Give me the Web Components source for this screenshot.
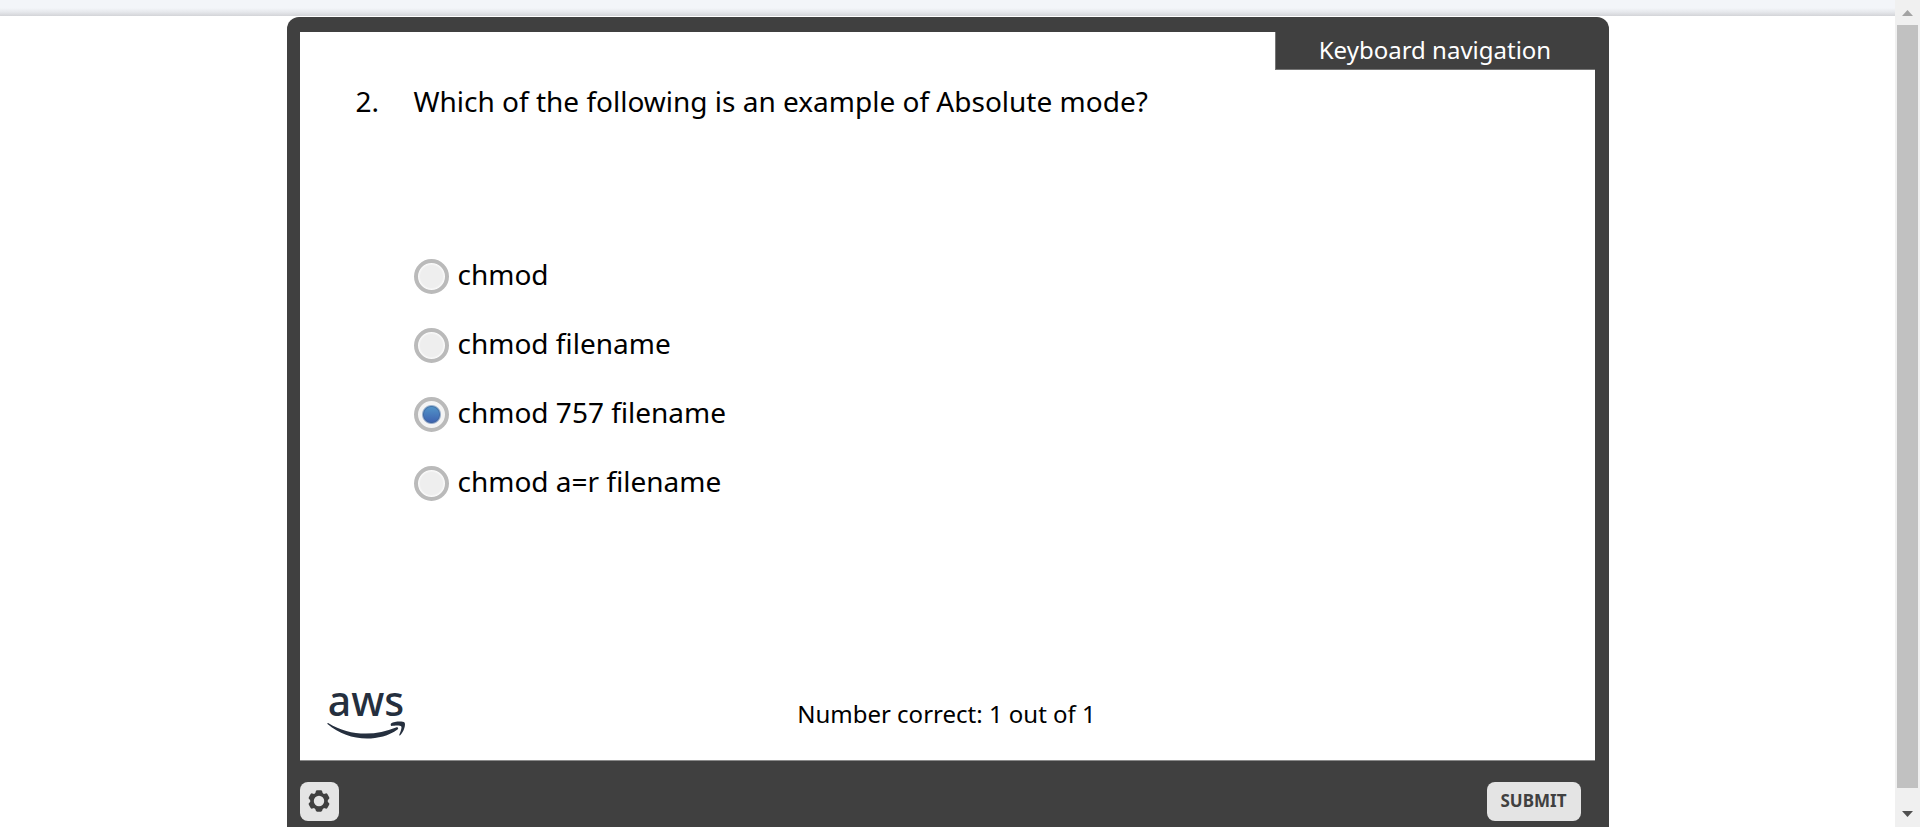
<!DOCTYPE html>
<html lang="en">
<head>
<meta charset="utf-8">
<title>Knowledge check</title>
<style>
  html, body { margin: 0; height: 100%; overflow: hidden; background: #fff; }
  body { font-family: "Noto Sans", "Open Sans", sans-serif; color: #000; }
</style>
</head>
<body>
<quiz-page>
  <quiz-player>
    <a slot="tab" href="#keys">Keyboard navigation</a>
    <quiz-question number="2." text="Which of the following is an example of Absolute mode?">
      <quiz-option value="a">chmod</quiz-option>
      <quiz-option value="b">chmod filename</quiz-option>
      <quiz-option value="c" checked>chmod 757 filename</quiz-option>
      <quiz-option value="d">chmod a=r filename</quiz-option>
    </quiz-question>
    <aws-logo slot="brand"></aws-logo>
    <span slot="score">Number correct: 1 out of 1</span>
    <settings-button slot="controls"></settings-button>
    <submit-button slot="controls">SUBMIT</submit-button>
  </quiz-player>
</quiz-page>

<script>
const define = (name, html, setup) => customElements.define(name, class extends HTMLElement {
  constructor() {
    super();
    this.attachShadow({ mode: 'open' }).innerHTML = html;
  }
  connectedCallback() { if (setup) setup(this, this.shadowRoot); }
});

define('scroll-rail', `
  <style>
    :host { display: flex; flex-direction: column; align-items: center; background: #f0f0f0; }
    svg { display: block; width: 25px; height: 25px; flex: none; }
    .thumb { width: 21px; flex: 1; background: #c1c1c1; }
    .rest { height: 14px; }
  </style>
  <svg viewBox="0 0 25 25" aria-hidden="true"><path d="M7 16h11l-5.500-6z" fill="#a3a3a3"/></svg>
  <div class="thumb"></div><div class="rest"></div>
  <svg viewBox="0 0 25 25" aria-hidden="true"><path d="M7 9h11l-5.500 6z" fill="#505050"/></svg>
`);

define('quiz-page', `
  <style>
    :host { display: grid; grid-template-columns: 1fr 25px; height: 100vh; }
    main { overflow: hidden; }
    .header { height: 16px; background: linear-gradient(#f3f5f9 0 50%, #e6e8ec 75%, #d3d4d8); }
    .stage { padding-top: 1px; }
  </style>
  <main><div class="header"></div><div class="stage"><slot></slot></div></main>
  <scroll-rail></scroll-rail>
`);

define('quiz-player', `
  <style>
    :host { display: block; box-sizing: border-box; width: 70%; min-width: 720px; max-width: 1322px; margin: 0 auto;
      padding: 15px 14px 0 13px; border-radius: 12px 12px 0 0; background: #404040; }
    .slide { display: flex; flex-direction: column; background: #fff; min-height: 728px; border-bottom: 1px solid #8a8a8a; }
    .tab { align-self: flex-end; box-sizing: border-box; width: 320px; height: 38px; background: #404040;
      border: solid #757575; border-width: 0 0 1px 1px; text-align: center; }
    ::slotted(a) { color: #fff; text-decoration: none; font-size: 24px; line-height: 36px; }
    .body { flex: 1; }
    .foot { display: grid; grid-template-columns: 1fr auto 1fr; align-items: end; padding: 0 28px 21px 27px; }
    .score { padding-bottom: 9px; font-size: 24px; line-height: 32px; }
    .bar { display: flex; justify-content: space-between; padding: 21px 14px 20px 0; }
  </style>
  <section class="slide">
    <div class="tab"><slot name="tab"></slot></div>
    <div class="body"><slot></slot></div>
    <div class="foot"><slot name="brand"></slot><div class="score"><slot name="score"></slot></div></div>
  </section>
  <div class="bar"><slot name="controls"></slot></div>
`);

define('quiz-question', `
  <style>
    :host { display: block; padding: 11px 28px 0 56px; font-size: 28px; line-height: 40px; }
    .row { display: grid; grid-template-columns: 58px 1fr; }
    h1, p { margin: 0; font: inherit; }
    .options { grid-column: 2; display: grid; gap: 29px; margin-top: 134px; }
  </style>
  <div class="row">
    <p class="num"></p><h1 id="q"></h1>
    <div class="options" role="radiogroup" aria-labelledby="q"><slot></slot></div>
  </div>
`, (el, root) => {
  root.querySelector('.num').textContent = el.getAttribute('number');
  root.querySelector('h1').textContent = el.getAttribute('text');
});

define('quiz-option', `
  <style>
    :host { display: block; }
    label { display: flex; align-items: start; gap: 9px; height: 40px; line-height: 38px; width: fit-content; cursor: pointer; }
    input { appearance: none; box-sizing: border-box; width: 35px; height: 35px; margin: 4px 0 0; border-radius: 50%;
      border: 4px solid #bababa; background: radial-gradient(circle, #eee 0 11px, #fafafa 13px); }
    input:checked { background:
      radial-gradient(circle, transparent 0 7px, #3c629799 8px, #f4f4f4 10px),
      linear-gradient(#5499cb 15%, #3c5eae 85%); }
  </style>
  <label><input type="radio" name="answer"><span><slot></slot></span></label>
`, (el, root) => {
  const input = root.querySelector('input');
  input.value = el.getAttribute('value');
  input.checked = el.hasAttribute('checked');
  input.addEventListener('change', () => {
    for (const other of el.parentElement.children)
      if (other !== el && other.shadowRoot) other.shadowRoot.querySelector('input').checked = false;
  });
});

define('aws-logo', `
  <style>
    :host { display: flex; flex-direction: column; align-items: center; gap: 5px; width: 79px; color: #252f3e; }
    span { font-size: 41px; line-height: 32px; font-weight: 500; }
    svg { display: block; width: 79px; height: 18px; }
  </style>
  <span>aws</span>
  <svg viewBox="0 0 79 18" fill="currentColor" aria-hidden="true">
    <path d="M1.500 2.200C13 9 25 12.600 39 12.600c10.500 0 20.500-2.300 30-6.200 1.700-.7 3 1 1.500 2.200C62 15 50.500 17.600 40 17.600 25.500 17.600 11.500 12.500.8 3.300-.1 2.500.5 1.600 1.500 2.200z"/>
    <path d="M64 2.600C67.500.2 76 .1 77.500 1.600c1.500 1.800-.6 9.300-4.300 12.700-.6.5-1.200.2-.9-.5 1-2.500 2.800-7.300 2-8.400-.9-1.200-6.700-.8-9.700-.4-.9 0-1.200-1.600-.6-2.400z"/>
  </svg>
`);

define('settings-button', `
  <style>
    :host { display: block; }
    button { display: grid; place-items: center; width: 39px; height: 39px; margin: 0; padding: 0 0 2px; border: 0;
      border-radius: 8px; background: #e4e4e4; color: #404040; }
    svg { display: block; width: 24px; height: 24px; }
  </style>
  <button type="button" aria-label="Settings">
    <svg viewBox="0 0 24 24" fill="none" stroke="currentColor" aria-hidden="true">
      <circle cx="12" cy="12" r="7" stroke-width="3.600"/>
      <g stroke-width="3" stroke-linejoin="round" fill="currentColor">
        <path d="M10.200 2.800h3.600l.4 1.700H9.800z"/>
        <path d="M10.200 2.800h3.600l.4 1.700H9.800z" transform="rotate(60 12 12)"/>
        <path d="M10.200 2.800h3.600l.4 1.700H9.800z" transform="rotate(120 12 12)"/>
        <path d="M10.200 2.800h3.600l.4 1.700H9.800z" transform="rotate(180 12 12)"/>
        <path d="M10.200 2.800h3.600l.4 1.700H9.800z" transform="rotate(240 12 12)"/>
        <path d="M10.200 2.800h3.600l.4 1.700H9.800z" transform="rotate(300 12 12)"/>
      </g>
    </svg>
  </button>
`);

define('submit-button', `
  <style>
    :host { display: block; }
    button { width: 94px; height: 39px; margin: 0; padding: 0 0 2px; border: 0; border-radius: 8px;
      background: #e4e4e4; color: #404040; font-family: inherit; font-weight: 700; font-size: 17px; line-height: 24px; }
  </style>
  <button type="button"><slot></slot></button>
`);
</script>
</body>
</html>
